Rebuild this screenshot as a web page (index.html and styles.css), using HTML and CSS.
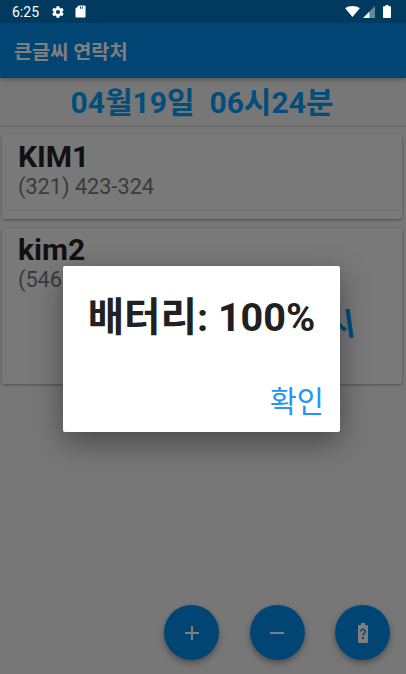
FILE: index.html
```html
<!DOCTYPE html>
<html lang="ko">
<head>
  <meta charset="UTF-8">
  <meta name="viewport" content="width=device-width, initial-scale=1.0">
  <title>큰글씨 연락처</title>
  <link rel="stylesheet" href="styles.css">
</head>
<body>
<div class="screen">
  <div class="statusbar">
    <span class="time">6:25</span>
    <svg class="st-icon" width="14" height="14" viewBox="0 0 24 24"><path fill="#fff" d="M19.4 13c.1-.3.1-.6.1-1s0-.7-.1-1l2.100-1.600c.2-.2.2-.4.1-.6l-2-3.500c-.1-.2-.4-.3-.6-.2l-2.500 1c-.5-.4-1.100-.7-1.700-1l-.4-2.600c0-.2-.2-.4-.5-.4h-4c-.2 0-.5.200-.5.400l-.4 2.600c-.6.300-1.200.6-1.700 1l-2.500-1c-.2-.1-.5 0-.6.200l-2 3.500c-.1.200-.1.400.1.600l2.100 1.600c-.1.300-.1.700-.1 1s0 .7.1 1l-2.100 1.600c-.2.200-.2.400-.1.600l2 3.500c.1.200.4.300.6.200l2.500-1c.5.400 1.100.7 1.700 1l.4 2.600c0 .2.300.4.500.4h4c.3 0 .5-.2.500-.4l.4-2.600c.6-.3 1.200-.6 1.700-1l2.500 1c.2.100.5 0 .6-.2l2-3.500c.1-.2.100-.4-.1-.6zM12 15.500a3.500 3.500 0 1 1 0-7 3.500 3.500 0 0 1 0 7z"/></svg>
    <svg class="st-icon" width="11" height="13" viewBox="0 0 12 14"><path fill="#fff" d="M4 .5h6.500c.6 0 1 .4 1 1v11c0 .6-.4 1-1 1h-9c-.6 0-1-.4-1-1V4z"/><path fill="#003a5e" d="M5.500 1.500h1v2.500h-1zM7.500 1.500h1v2.500h-1z"/></svg>
    <span class="spacer"></span>
    <svg width="15" height="11" viewBox="0 0 16 12"><path fill="#fff" d="M0 2.500C2 .9 4.900 0 8 0s6 .9 8 2.500L8 12z"/></svg>
    <svg class="signal" width="12" height="12" viewBox="0 0 12 12"><path fill="#fff" d="M0 12 6.500 5.500V12z"/><path fill="#fff" opacity=".4" d="M6.500 5.500 12 0v12H6.500z"/></svg>
    <svg class="battery" width="8" height="13" viewBox="0 0 8 13"><path fill="#fff" d="M2.500 0h3v1.200H7c.5 0 1 .4 1 1V12c0 .6-.5 1-1 1H1c-.5 0-1-.4-1-1V2.200c0-.6.500-1 1-1h1.500z"/></svg>
  </div>
  <div class="appbar">큰글씨 연락처</div>
  <div class="clock">04월19일&nbsp;&nbsp;06시24분</div>
  <div class="list">
    <div class="card">
      <div class="name">KIM1</div>
      <div class="phone">(321) 423-324</div>
      <div class="card-rule"></div>
    </div>
    <div class="card card-tall">
      <div class="name">kim2</div>
      <div class="phone">(546</div>
      <div class="card-note">시</div>
    </div>
  </div>
  <div class="fabs">
    <div class="fab">
      <svg width="24" height="24" viewBox="0 0 24 24"><path fill="#fff" d="M19 13h-6v6h-2v-6H5v-2h6V5h2v6h6z"/></svg>
    </div>
    <div class="fab">
      <svg width="24" height="24" viewBox="0 0 24 24"><path fill="#fff" d="M19 13H5v-2h14z"/></svg>
    </div>
    <div class="fab">
      <svg width="24" height="24" viewBox="0 0 24 24"><path fill="#fff" d="M15.670 4H14V2h-4v2H8.330C7.600 4 7 4.600 7 5.330v15.330C7 21.400 7.600 22 8.330 22h7.330c.74 0 1.340-.6 1.340-1.330V5.330C17 4.600 16.400 4 15.670 4zM13 18h-2v-2h2v2zm1.300-5.840s-.38.420-.67.710c-.48.480-.83 1.150-.83 1.630h-1.600c0-.830.460-1.520.930-2l.93-.940c.270-.270.440-.650.440-1.060 0-.830-.670-1.500-1.500-1.500s-1.500.670-1.500 1.500H9c0-1.660 1.340-3 3-3s3 1.340 3 3c0 .660-.270 1.260-.700 1.660z"/></svg>
    </div>
  </div>
  <div class="scrim"></div>
  <div class="dialog">
    <div class="dialog-msg">배터리: 100%</div>
    <div class="dialog-btn">확인</div>
  </div>
</div>
</body>
</html>
```

FILE: styles.css
```css
* { box-sizing: border-box; }
html, body { margin: 0; padding: 0; }
body {
  font-family: Roboto, "Noto Sans CJK KR", sans-serif;
  background: #fafafa;
}
.screen {
  position: relative;
  width: 406px;
  height: 674px;
  overflow: hidden;
  display: flex;
  flex-direction: column;
  background: #eeeeee;
}
/* the status bar sits above the dim layer */
.statusbar {
  position: relative;
  z-index: 3;
  height: 23px;
  flex: none;
  display: flex;
  align-items: center;
  padding: 0 15px 0 12px;
  background: #003a5e;
  color: #fff;
  font-size: 14px;
}
.time { width: 39px; }
.st-icon { margin-right: 10px; }
.spacer { flex: 1; }
.signal { margin-left: 3px; }
.battery { margin-left: 8px; }
.appbar {
  height: 55px;
  flex: none;
  display: flex;
  align-items: center;
  padding-left: 14px;
  background: #008ae8;
  color: #fff;
  font-size: 19.7px;
  font-weight: 700;
  box-shadow: 0 2px 4px rgba(0,0,0,.25);
}
.clock {
  height: 49px;
  flex: none;
  display: flex;
  align-items: center;
  justify-content: center;
  padding: 0 2px 4px 0;
  color: #009cf6;
  font-size: 30px;
  font-weight: 700;
  border-bottom: 1px solid #d0d0d0;
}
.list {
  display: flex;
  flex-direction: column;
  gap: 9px;
  padding: 8px 4px 0 2px;
}
.card {
  position: relative;
  height: 84px;
  padding: 5px 16px;
  background: #f2f2f2;
  border-radius: 3px;
  box-shadow: 0 1px 3px rgba(0,0,0,.35);
}
.card-tall { height: 156px; }
.card-rule {
  position: absolute;
  left: 0;
  right: 0;
  bottom: 8px;
  border-top: 1px solid #e4e4e4;
}
.card-note {
  position: absolute;
  right: 47px;
  top: 71px;
  color: #009cf6;
  font-size: 31px;
  font-weight: 700;
  transform: skewX(8deg);
}
.name {
  color: #222;
  font-size: 30px;
  font-weight: 700;
  line-height: 34px;
}
.phone {
  color: #777;
  font-size: 21.7px;
  line-height: 26px;
}
.fabs {
  position: absolute;
  right: 16px;
  bottom: 14px;
  display: flex;
  gap: 30.5px;
}
.fab {
  width: 55px;
  height: 55px;
  border-radius: 50%;
  display: flex;
  align-items: center;
  justify-content: center;
  background: #008ae8;
  box-shadow: 0 3px 6px rgba(0,0,0,.35);
}
.scrim {
  position: absolute;
  inset: 0;
  z-index: 2;
  background: rgba(0,0,0,.5);
}
.dialog {
  position: absolute;
  z-index: 4;
  left: 63px;
  top: 266px;
  width: 277px;
  height: 166px;
  background: #fff;
  border-radius: 2px;
  box-shadow: 0 10px 30px rgba(0,0,0,.4);
  display: flex;
  flex-direction: column;
  align-items: center;
}
.dialog-msg {
  margin-top: 27px;
  color: #212121;
  font-size: 39.6px;
  font-weight: 700;
  line-height: 50px;
  white-space: nowrap;
}
.dialog-btn {
  align-self: flex-end;
  margin-top: 41px;
  margin-right: 16px;
  color: #2196f3;
  font-size: 29.5px;
  line-height: 36px;
}
```
